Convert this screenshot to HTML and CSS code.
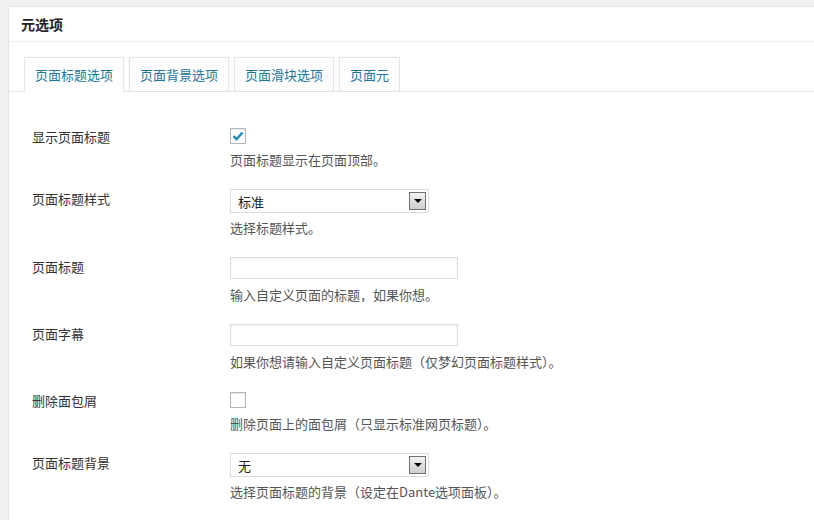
FILE: index.html
```html
<!DOCTYPE html>
<html>
<head>
    <title>元选项</title>
    <link rel="stylesheet" href="styles.css">
</head>
<body>
    <div class="postbox">
        <h2 class="hndle">元选项</h2>
        <div class="inside">
            <ul class="tabs">
                <li class="tab active">页面标题选项</li>
                <li class="tab">页面背景选项</li>
                <li class="tab">页面滑块选项</li>
                <li class="tab">页面元</li>
            </ul>
            <div class="fields">
                <div class="field">
                    <div class="label">显示页面标题</div>
                    <div class="control">
                        <span class="checkbox">
                            <svg width="12" height="10" viewBox="0 0 12 10"><path d="M1.5 5.2 L4.5 8.2 L10.5 1.5" fill="none" stroke="#1e8cbe" stroke-width="2.4"/></svg>
                        </span>
                        <p class="desc">页面标题显示在页面顶部。</p>
                    </div>
                </div>
                <div class="field">
                    <div class="label">页面标题样式</div>
                    <div class="control">
                        <div class="select"><span>标准</span><span class="arrow"></span></div>
                        <p class="desc">选择标题样式。</p>
                    </div>
                </div>
                <div class="field">
                    <div class="label">页面标题</div>
                    <div class="control">
                        <input class="text" type="text">
                        <p class="desc">输入自定义页面的标题，如果你想。</p>
                    </div>
                </div>
                <div class="field">
                    <div class="label">页面字幕</div>
                    <div class="control">
                        <input class="text" type="text">
                        <p class="desc">如果你想请输入自定义页面标题（仅梦幻页面标题样式）。</p>
                    </div>
                </div>
                <div class="field">
                    <div class="label">删除面包屑</div>
                    <div class="control">
                        <span class="checkbox"></span>
                        <p class="desc">删除页面上的面包屑（只显示标准网页标题）。</p>
                    </div>
                </div>
                <div class="field">
                    <div class="label">页面标题背景</div>
                    <div class="control">
                        <div class="select"><span>无</span><span class="arrow"></span></div>
                        <p class="desc">选择页面标题的背景（设定在Dante选项面板）。</p>
                    </div>
                </div>
            </div>
        </div>
    </div>
</body>
</html>
```
FILE: styles.css
```css
body {
    margin: 0;
    background: #f1f1f1;
    font-family: "Noto Sans CJK SC", "Liberation Sans", sans-serif;
    font-size: 13px;
    color: #333;
    overflow: hidden;
}
.postbox {
    margin: 6px -20px 0 8px;
    background: #fff;
    border: 1px solid #e5e5e5;
    box-shadow: 0 1px 1px rgba(0, 0, 0, 0.04);
}
.hndle {
    margin: 0;
    height: 35px;
    line-height: 34px;
    padding: 0 12px;
    font-size: 14px;
    font-weight: bold;
    color: #222;
    border-bottom: 1px solid #eee;
    box-sizing: border-box;
}
.tabs {
    display: flex;
    gap: 5px;
    margin: 0;
    padding: 15px 0 0 15px;
    list-style: none;
    border-bottom: 1px solid #e5e5e5;
}
.tab {
    padding: 0 10px;
    height: 33px;
    line-height: 33px;
    color: #21759b;
    background: #fdfdfd;
    border: 1px solid #e5e5e5;
    border-bottom: none;
    box-shadow: 0 0 2px rgba(0, 0, 0, 0.05);
}
.tab.active {
    background: #fff;
    height: 34px;
    margin-bottom: -1px;
    position: relative;
}
.fields {
    padding: 25px 0 20px;
}
.field {
    display: grid;
    grid-template-columns: 198px 1fr;
    padding: 10px 0 9px 23px;
}
.label {
    line-height: 20px;
    color: #333;
}
.control {
    display: flex;
    flex-direction: column;
    align-items: flex-start;
}
.desc {
    margin: 6px 0 0;
    line-height: 20px;
    color: #555;
}
.checkbox {
    width: 16px;
    height: 16px;
    margin-top: 1px;
    box-sizing: border-box;
    border: 1px solid #b4b9be;
    background: #fff;
    box-shadow: inset 0 1px 2px rgba(0, 0, 0, 0.1);
    display: flex;
    align-items: center;
    justify-content: center;
}
.select {
    width: 199px;
    height: 24px;
    box-sizing: border-box;
    border: 1px solid #ddd;
    background: #fff;
    display: flex;
    align-items: center;
    justify-content: space-between;
    padding: 0 2px 0 7px;
    color: #222;
}
.select + .desc {
    margin-top: 5px;
}
.arrow {
    width: 17px;
    height: 18px;
    box-sizing: border-box;
    border: 1px solid #707070;
    background: linear-gradient(#f2f2f2, #cfcfcf);
    position: relative;
}
.arrow::after {
    content: "";
    position: absolute;
    left: 4px;
    top: 6px;
    border-left: 4px solid transparent;
    border-right: 4px solid transparent;
    border-top: 4px solid #000;
}
.text {
    width: 228px;
    height: 22px;
    margin: 0;
    box-sizing: border-box;
    border: 1px solid #ddd;
    box-shadow: inset 0 1px 2px rgba(0, 0, 0, 0.07);
    background: #fff;
    font-family: inherit;
}
```
